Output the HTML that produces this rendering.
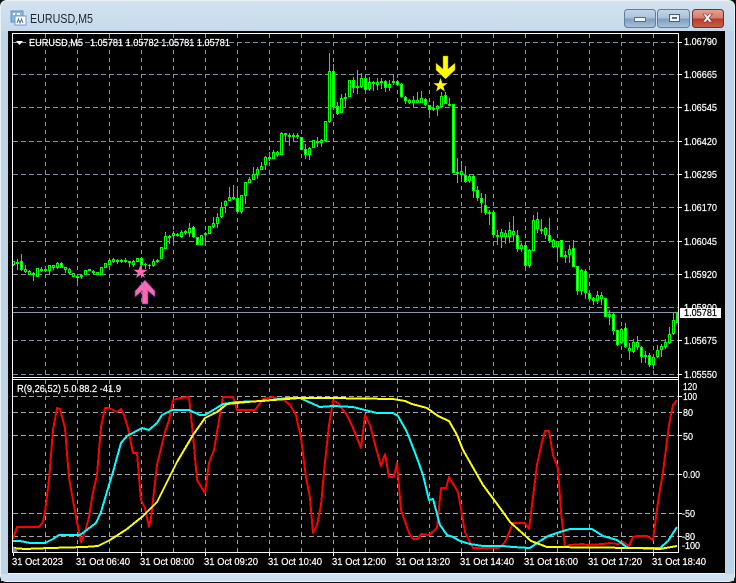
<!DOCTYPE html>
<html>
<head>
<meta charset="utf-8">
<title>EURUSD,M5</title>
<style>
html,body{margin:0;padding:0;background:#111;width:736px;height:583px;overflow:hidden}
svg{position:absolute;left:0;top:0;display:block}
text{font-family:"Liberation Sans",sans-serif;font-size:10.5px;fill:#fff;stroke:#fff;stroke-width:.22px}
</style>
</head>
<body>
<svg width="736" height="583" viewBox="0 0 736 583">
<defs>
<linearGradient id="ti" x1="0" y1="0" x2="0" y2="1"><stop offset="0" stop-color="#d3e2ef"/><stop offset=".06" stop-color="#c4d8ea"/><stop offset="1" stop-color="#b6cfe5"/></linearGradient>
<linearGradient id="bb" x1="0" y1="0" x2="0" y2="1"><stop offset="0" stop-color="#c4d6e8"/><stop offset=".48" stop-color="#a9c2da"/><stop offset=".52" stop-color="#7f9dbd"/><stop offset="1" stop-color="#a6c2dc"/></linearGradient>
<linearGradient id="rb" x1="0" y1="0" x2="0" y2="1"><stop offset="0" stop-color="#e5a295"/><stop offset=".48" stop-color="#d27e6e"/><stop offset=".52" stop-color="#b83b28"/><stop offset="1" stop-color="#c9604a"/></linearGradient>
</defs>
<rect x="0.5" y="0.5" width="734" height="581" rx="6" fill="url(#ti)" stroke="#e9f0f6"/>
<rect x="1" y="31" width="7" height="550" fill="#bcd3e8"/>
<rect x="725" y="31" width="9" height="550" fill="#bcd3e8"/>
<rect x="1" y="574" width="733" height="7" fill="#cfe1f0"/>
<rect x="8" y="573" width="717" height="1" fill="#f2f7fb"/>
<rect x="8" y="31" width="717" height="542" fill="#000"/>

<!-- title icon -->
<g shape-rendering="crispEdges">
<rect x="11" y="11" width="12" height="11" fill="#8fb4dc" stroke="#5f8fc4"/>
<rect x="15" y="16" width="11" height="9" fill="#fff" stroke="#6e9bcb"/>
<rect x="13" y="13" width="2" height="2" fill="#fff"/><rect x="17" y="13" width="3" height="2" fill="#fff"/>
</g>
<path d="M17 23l1.5-4 1.5 4 1.5-4 1.5 4" fill="none" stroke="#3f74b5"/>
<text x="30" y="23" textLength="63" lengthAdjust="spacingAndGlyphs" style="font-size:13px;fill:#1c2530;stroke:none">EURUSD,M5</text>

<!-- window buttons -->
<rect x="624.5" y="9.5" width="31" height="18" rx="3" fill="url(#bb)" stroke="#5f7f9f"/>
<rect x="657.5" y="9.5" width="32" height="18" rx="3" fill="url(#bb)" stroke="#5f7f9f"/>
<rect x="692.5" y="9.5" width="31" height="18" rx="3" fill="url(#rb)" stroke="#6d3028"/>
<rect x="634.5" y="17.5" width="11" height="4" fill="#eef3f8" stroke="#5a6f86"/>
<rect x="669.5" y="14.5" width="10" height="7" fill="#eef3f8" stroke="#4a5f76"/>
<rect x="672" y="17" width="5" height="2" fill="#5a6f86"/>
<path d="M703 14h3l1.5 2 1.500-2h3.500l-3.300 4 3.300 4h-3.500l-1.500-2-1.500 2h-3.500l3.300-4z" fill="#f4f4f4" stroke="#71352c" stroke-width=".6"/>

<!-- grid -->
<g shape-rendering="crispEdges" fill="none" stroke-width="1">
<path stroke="#8290a4" stroke-dasharray="5 3" d="M13 42.500H678M13 74.500H678M13 107.500H678M13 141.500H678M13 174.500H678M13 207.500H678M13 241.500H678M13 274.500H678M13 307.500H678M13 340.500H678M13 374.500H678"/>
<path stroke="#8290a4" stroke-dasharray="4 4" d="M45.500 34V377M77.500 34V377M109.500 34V377M141.500 34V377M173.500 34V377M205.500 34V377M237.500 34V377M269.500 34V377M301.500 34V377M333.500 34V377M365.500 34V377M397.500 34V377M429.500 34V377M461.500 34V377M493.500 34V377M525.500 34V377M557.500 34V377M589.500 34V377M621.500 34V377M653.500 34V377"/>
<path stroke="#a2a6ac" stroke-dasharray="5 3" d="M13 396.500H678M13 412.500H678M13 435.500H678M13 474.500H678M13 513.500H678M13 536.500H678"/>
<path stroke="#a2a6ac" stroke-dasharray="4 4" d="M45.500 380V552M77.500 380V552M109.500 380V552M141.500 380V552M173.500 380V552M205.500 380V552M237.500 380V552M269.500 380V552M301.500 380V552M333.500 380V552M365.500 380V552M397.500 380V552M429.500 380V552M461.500 380V552M493.500 380V552M525.500 380V552M557.500 380V552M589.500 380V552M621.500 380V552M653.500 380V552"/>
<!-- price line -->
<path stroke="#8a9aac" d="M13 312.500H678"/>

<!-- candles -->
<path stroke="#00ff00" d="M13.500 261V266M17.500 259V270M21.500 254V271M25.500 265V273M29.500 270V275M33.500 272V281M41.500 267V272M45.500 268V272M49.500 265V274M53.500 265V270M57.500 262V269M61.500 262V268M65.500 267V273M69.500 268V275M77.500 276V283M81.500 274V279M93.500 270V275M113.500 258V263M117.500 259V264M121.500 259V263M125.500 258V263M129.500 261V267M133.500 260V267M141.500 257V266M145.500 263V269M149.500 264V269M153.500 259V267M157.500 259V263M165.500 232V249M169.500 235V244M173.500 231V241M177.500 233V237M181.500 230V238M185.500 230V235M189.500 223V237M193.500 226V238M197.500 237V245M205.500 232V241M213.500 217V228M217.500 213V228M221.500 202V218M225.500 200V213M229.500 187V201M233.500 185V200M237.500 190V212M241.500 195V214M245.500 182V204M249.500 177V183M253.500 167V180M257.500 167V179M261.500 162V170M265.500 156V170M269.500 152V161M273.500 150V159M277.500 151V157M281.500 132V155M285.500 133V142M289.500 133V146M293.500 133V142M297.500 133V139M305.500 144V159M309.500 147V160M317.500 137V147M321.500 139V147M329.500 53V123M333.500 64V108M337.500 102V115M341.500 94V113M345.500 93V107M353.500 77V93M357.500 70V94M361.500 73V88M365.500 75V91M369.500 77V91M373.500 81V91M377.500 78V90M381.500 78V89M385.500 80V92M389.500 80V91M393.500 75V85M397.500 80V86M401.500 83V98M405.500 96V104M409.500 99V104M413.500 96V107M417.500 92V103M421.500 91V103M425.500 98V106M429.500 105V114M433.500 101V111M437.500 105V116M441.500 92V107M445.500 92V104M449.500 98V106M457.500 158V183M461.500 161V182M465.500 166V183M469.500 174V183M473.500 174V198M477.500 186V201M481.500 193V213M485.500 194V215M489.500 210V225M497.500 230V245M501.500 229V248M505.500 230V244M509.500 222V243M513.500 216V241M517.500 230V252M521.500 243V252M525.500 245V271M529.500 249V268M533.500 215V251M537.500 212V233M541.500 219V234M545.500 227V239M549.500 218V243M553.500 239V248M557.500 241V261M565.500 251V263M569.500 245V263M573.500 240V267M577.500 266V295M581.500 269V295M585.500 269V299M589.500 292V300M593.500 297V305M597.500 291V304M601.500 292V305M609.500 310V325M613.500 313V335M617.500 330V346M621.500 328V344M625.500 323V348M629.500 343V360M633.500 339V353M637.500 336V350M641.500 346V363M645.500 351V363M649.500 353V367M653.500 355V369M657.500 345V358M661.500 344V357M665.500 339V349M669.500 327V344M673.500 313V335M677.500 312V323"/>
<path stroke="#00ff00" stroke-width="3" d="M13.500 261V265M17.500 262V264M21.500 261V270M25.500 269V272M29.500 271V275M33.500 273V275M37.500 268V277M41.500 269V271M45.500 269V271M49.500 265V271M53.500 265V268M57.500 263V268M61.500 263V268M65.500 267V270M69.500 269V273M73.500 273V277M77.500 276V278M81.500 275V277M85.500 270V275M89.500 269V271M93.500 271V273M97.500 272V275M101.500 267V275M105.500 263V268M109.500 260V265M113.500 259V262M117.500 260V262M121.500 260V262M125.500 260V262M129.500 261V263M133.500 261V265M137.500 258V262M141.500 258V265M145.500 264V265M149.500 265V266M153.500 261V266M157.500 260V262M161.500 247V259M165.500 236V249M169.500 236V238M173.500 233V236M177.500 234V236M181.500 232V237M185.500 231V233M189.500 228V233M193.500 227V237M197.500 237V245M201.500 235V245M205.500 233V235M209.500 226V234M213.500 223V227M217.500 217V224M221.500 207V217M225.500 201V206M229.500 197V201M233.500 197V199M237.500 198V212M241.500 195V212M245.500 182V196M249.500 179V183M253.500 174V180M257.500 169V175M261.500 166V170M265.500 157V165M269.500 157V159M273.500 152V159M277.500 152V155M281.500 133V155M285.500 133V135M289.500 135V137M293.500 135V137M297.500 135V137M301.500 137V150M305.500 149V155M309.500 148V155M313.500 140V148M317.500 141V143M321.500 140V143M325.500 121V141M329.500 71V122M333.500 71V107M337.500 106V114M341.500 98V113M345.500 97V99M349.500 80V97M353.500 80V88M357.500 86V88M361.500 78V87M365.500 78V90M369.500 82V89M373.500 82V84M377.500 82V85M381.500 81V83M385.500 81V88M389.500 84V88M393.500 81V83M397.500 81V85M401.500 84V97M405.500 97V101M409.500 100V103M413.500 100V103M417.500 100V103M421.500 98V103M425.500 99V105M429.500 105V110M433.500 108V110M437.500 106V109M441.500 96V107M445.500 95V104M449.500 104V106M453.500 104V173M457.500 172V174M461.500 171V175M465.500 175V182M469.500 176V181M473.500 176V191M477.500 190V198M481.500 198V203M485.500 205V213M489.500 212V214M493.500 212V235M497.500 235V237M501.500 232V237M505.500 233V237M509.500 230V237M513.500 231V235M517.500 235V249M521.500 245V249M525.500 245V266M529.500 250V266M533.500 220V251M537.500 219V229M541.500 229V231M545.500 228V235M549.500 235V241M553.500 240V247M557.500 241V247M561.500 240V257M565.500 255V257M569.500 249V255M573.500 248V267M577.500 266V291M581.500 270V291M585.500 271V293M589.500 293V299M593.500 298V301M597.500 295V301M601.500 295V299M605.500 298V317M609.500 314V317M613.500 314V331M617.500 330V345M621.500 329V343M625.500 328V347M629.500 348V351M633.500 342V352M637.500 342V347M641.500 347V357M645.500 355V357M649.500 355V365M653.500 357V365M657.500 350V357M661.500 346V350M665.500 342V347M669.500 334V343M673.500 320V334M677.500 312V323"/>
<path stroke="#fff" d="M21.500 262V269M61.500 264V267M141.500 259V264M193.500 228V236M197.500 238V244M237.500 199V211M301.500 138V149M305.500 150V154M333.500 72V106M337.500 107V113M353.500 81V87M365.500 79V89M385.500 82V87M397.500 82V84M401.500 85V96M405.500 98V100M425.500 100V104M429.500 106V109M445.500 96V103M453.500 105V172M465.500 176V181M473.500 177V190M477.500 191V197M481.500 199V202M485.500 206V212M493.500 213V234M517.500 236V248M525.500 246V265M549.500 236V240M561.500 241V256M573.500 249V266M577.500 267V290M585.500 272V292M589.500 294V298M605.500 299V316M613.500 315V330M617.500 331V344M625.500 329V346M641.500 348V356M649.500 356V364"/>
<path stroke="#000" d="M13.500 262V264M25.500 270V271M29.500 272V274M37.500 269V276M49.500 266V270M53.500 266V267M57.500 264V267M65.500 268V269M69.500 270V272M73.500 274V276M85.500 271V274M97.500 273V274M101.500 268V274M105.500 264V267M109.500 261V264M113.500 260V261M133.500 262V264M137.500 259V261M153.500 262V265M161.500 248V258M165.500 237V248M173.500 234V235M181.500 233V236M189.500 229V232M201.500 236V244M209.500 227V233M213.500 224V226M217.500 218V223M221.500 208V216M225.500 202V205M229.500 198V200M241.500 196V211M245.500 183V195M249.500 180V182M253.500 175V179M257.500 170V174M261.500 167V169M265.500 158V164M273.500 153V158M277.500 153V154M281.500 134V154M309.500 149V154M313.500 141V147M321.500 141V142M325.500 122V140M329.500 72V121M341.500 99V112M349.500 81V96M361.500 79V86M369.500 83V88M377.500 83V84M389.500 85V87M409.500 101V102M413.500 101V102M417.500 101V102M421.500 99V102M437.500 107V108M441.500 97V106M461.500 172V174M469.500 177V180M501.500 233V236M505.500 234V236M509.500 231V236M513.500 232V234M521.500 246V248M529.500 251V265M533.500 221V250M537.500 220V228M545.500 229V234M553.500 241V246M557.500 242V246M569.500 250V254M581.500 271V290M597.500 296V300M601.500 296V298M609.500 315V316M621.500 330V342M629.500 349V350M633.500 343V351M637.500 343V346M653.500 358V364M657.500 351V356M661.500 347V349M665.500 343V346M669.500 335V342M673.500 321V333"/>
</g>

<!-- oscillator lines -->
<g fill="none" stroke-width="2" stroke-linejoin="round" shape-rendering="crispEdges">
<polyline stroke="#ff0000" points="13,539 17,527 39,527 43,522 45,512 49,480 53,430 57,408 60,409 65,428 69,478 77,522 81,542 85,532 89,517 93,492 97,475 101,427 105,408 109,408 117,412 121,409 124,415 128,428 133,453 137,453 141,500 145,508 149,527 151,518 157,465 165,432 169,420 173,400 180,398 189,397 193,435 197,480 205,493 209,463 214,450 223,397 233,397 237,410 255,410 263,399 273,397 284,400 290,405 296,415 301,438 306,477 310,498 313,533 317,525 321,505 325,462 329,425 333,401 337,402 347,415 353,428 361,448 365,415 370,425 376,448 381,466 385,454 389,477 394,477 397,463 401,510 409,533 413,539 418,539 421,534 429,535 437,528 441,488 446,488 449,477 458,492 465,532 473,548 499,548 505,542 513,523 525,523 529,529 532,505 537,465 542,442 545,431 549,431 553,455 558,468 561,512 565,547 569,545 583,544 587,545 603,544 610,543 618,544 623,542 629,546 633,537 637,536 647,536 653,540 658,502 663,472 669,425 673,405 677,400"/>
<polyline stroke="#00ffff" points="13,541 20,541 30,543 45,543 53,539 59,535 80,535 96,523 101,512 109,485 113,472 121,443 127,436 142,428 149,430 157,423 162,415 172,410 189,410 200,415 205,415 223,404 237,402 263,401 287,398 300,398 320,407 333,406 353,407 377,413 393,413 398,416 407,432 417,458 423,475 429,500 433,499 440,525 447,535 453,537 460,541 470,544 483,546 503,546 513,547 530,548 540,541 548,536 560,532 570,529 592,529 603,536 617,540 628,548 660,548 668,541 677,527"/>
<polyline stroke="#ffff00" points="13,548 25,549 50,548 85,547 98,546 110,540 127,529 143,516 157,502 167,482 177,462 193,435 205,418 217,412 227,404 247,402 273,400 300,398 330,398 393,399 405,401 412,404 427,408 438,416 449,421 457,435 463,450 483,485 503,512 510,522 531,541 547,547 637,548 660,549 677,546"/>
</g>

<!-- signals -->
<polygon points="140.500,264.500 142.300,269.700 147.600,269.700 143.300,272.900 144.900,278 140.500,274.900 136.100,278 137.700,272.900 133.400,269.700 138.700,269.700" fill="#ff69b4"/>
<path d="M145 280L155 291V297L148 291V304H142V291L135 297V291Z" fill="#ff69b4" stroke="#5b3a8c" stroke-width=".7"/>
<polygon points="440.500,78 442.300,83.200 447.600,83.200 443.300,86.400 444.900,91.500 440.500,88.400 436.100,91.500 437.700,86.400 433.400,83.200 438.700,83.200" fill="#ffff00"/>
<path d="M443 56H448V69L455 63V70L445.500 79L436 70V63L443 69Z" fill="#ffff00" stroke="#a08000" stroke-width=".5"/>

<!-- chart borders -->
<g shape-rendering="crispEdges" fill="#fff">
<rect x="12" y="33" width="667" height="1"/>
<rect x="12" y="33" width="1" height="520"/>
<rect x="678" y="33" width="1" height="520"/>
<rect x="12" y="377" width="667" height="1"/>
<rect x="12" y="379" width="667" height="1"/>
<rect x="12" y="552" width="667" height="1"/>
<path d="M679 42h3v1h-3zM679 74h3v1h-3zM679 107h3v1h-3zM679 141h3v1h-3zM679 174h3v1h-3zM679 207h3v1h-3zM679 241h3v1h-3zM679 274h3v1h-3zM679 340h3v1h-3zM679 374h3v1h-3zM679 396h3v1h-3zM679 412h3v1h-3zM679 435h3v1h-3zM679 474h3v1h-3zM679 513h3v1h-3zM679 536h3v1h-3z"/>
<path d="M13 553h1v3h-1zM77 553h1v3h-1zM141 553h1v3h-1zM205 553h1v3h-1zM269 553h1v3h-1zM333 553h1v3h-1zM397 553h1v3h-1zM461 553h1v3h-1zM525 553h1v3h-1zM589 553h1v3h-1zM653 553h1v3h-1z"/>
</g>
<polygon points="13,546 18,552 13,552" fill="#808890"/>

<!-- header -->
<polygon points="16,41 23,41 19.500,45" fill="#fff"/>
<text x="29" y="46" textLength="54" lengthAdjust="spacingAndGlyphs">EURUSD,M5</text>
<text x="90" y="46" textLength="140" lengthAdjust="spacingAndGlyphs">1.05781 1.05782 1.05781 1.05781</text>
<text x="17" y="392" textLength="104" lengthAdjust="spacingAndGlyphs">R(9,26,52) 5.0 88.2 -41.9</text>

<!-- price axis -->
<g>
<text x="684" y="45" textLength="33" lengthAdjust="spacingAndGlyphs">1.06790</text>
<text x="684" y="78" textLength="33" lengthAdjust="spacingAndGlyphs">1.06665</text>
<text x="684" y="111" textLength="33" lengthAdjust="spacingAndGlyphs">1.06545</text>
<text x="684" y="145" textLength="33" lengthAdjust="spacingAndGlyphs">1.06420</text>
<text x="684" y="178" textLength="33" lengthAdjust="spacingAndGlyphs">1.06295</text>
<text x="684" y="211" textLength="33" lengthAdjust="spacingAndGlyphs">1.06170</text>
<text x="684" y="245" textLength="33" lengthAdjust="spacingAndGlyphs">1.06045</text>
<text x="684" y="278" textLength="33" lengthAdjust="spacingAndGlyphs">1.05920</text>
<text x="684" y="311" textLength="33" lengthAdjust="spacingAndGlyphs">1.05800</text>
<rect x="680" y="308" width="41" height="10" fill="#fff"/>
<text x="684" y="316" textLength="33" lengthAdjust="spacingAndGlyphs" style="fill:#000;stroke:#000">1.05781</text>
<text x="684" y="344" textLength="33" lengthAdjust="spacingAndGlyphs">1.05675</text>
<text x="684" y="378" textLength="33" lengthAdjust="spacingAndGlyphs">1.05550</text>
<text x="683" y="390" textLength="14" lengthAdjust="spacingAndGlyphs">120</text>
<text x="683" y="400" textLength="14" lengthAdjust="spacingAndGlyphs">100</text>
<text x="683" y="416" textLength="10" lengthAdjust="spacingAndGlyphs">80</text>
<text x="683" y="440" textLength="10" lengthAdjust="spacingAndGlyphs">50</text>
<text x="683" y="478" textLength="17" lengthAdjust="spacingAndGlyphs">0.00</text>
<text x="682" y="517" textLength="13" lengthAdjust="spacingAndGlyphs">-50</text>
<text x="682" y="540" textLength="13" lengthAdjust="spacingAndGlyphs">-80</text>
<text x="682" y="549" textLength="18" lengthAdjust="spacingAndGlyphs">-100</text>
</g>

<!-- time axis -->
<g>
<text x="12" y="565" textLength="51" lengthAdjust="spacingAndGlyphs">31 Oct 2023</text>
<text x="76" y="565" textLength="54" lengthAdjust="spacingAndGlyphs">31 Oct 06:40</text>
<text x="140" y="565" textLength="54" lengthAdjust="spacingAndGlyphs">31 Oct 08:00</text>
<text x="204" y="565" textLength="54" lengthAdjust="spacingAndGlyphs">31 Oct 09:20</text>
<text x="268" y="565" textLength="54" lengthAdjust="spacingAndGlyphs">31 Oct 10:40</text>
<text x="332" y="565" textLength="54" lengthAdjust="spacingAndGlyphs">31 Oct 12:00</text>
<text x="396" y="565" textLength="54" lengthAdjust="spacingAndGlyphs">31 Oct 13:20</text>
<text x="460" y="565" textLength="54" lengthAdjust="spacingAndGlyphs">31 Oct 14:40</text>
<text x="524" y="565" textLength="54" lengthAdjust="spacingAndGlyphs">31 Oct 16:00</text>
<text x="588" y="565" textLength="54" lengthAdjust="spacingAndGlyphs">31 Oct 17:20</text>
<text x="652" y="565" textLength="54" lengthAdjust="spacingAndGlyphs">31 Oct 18:40</text>
</g>
</svg>
</body>
</html>
